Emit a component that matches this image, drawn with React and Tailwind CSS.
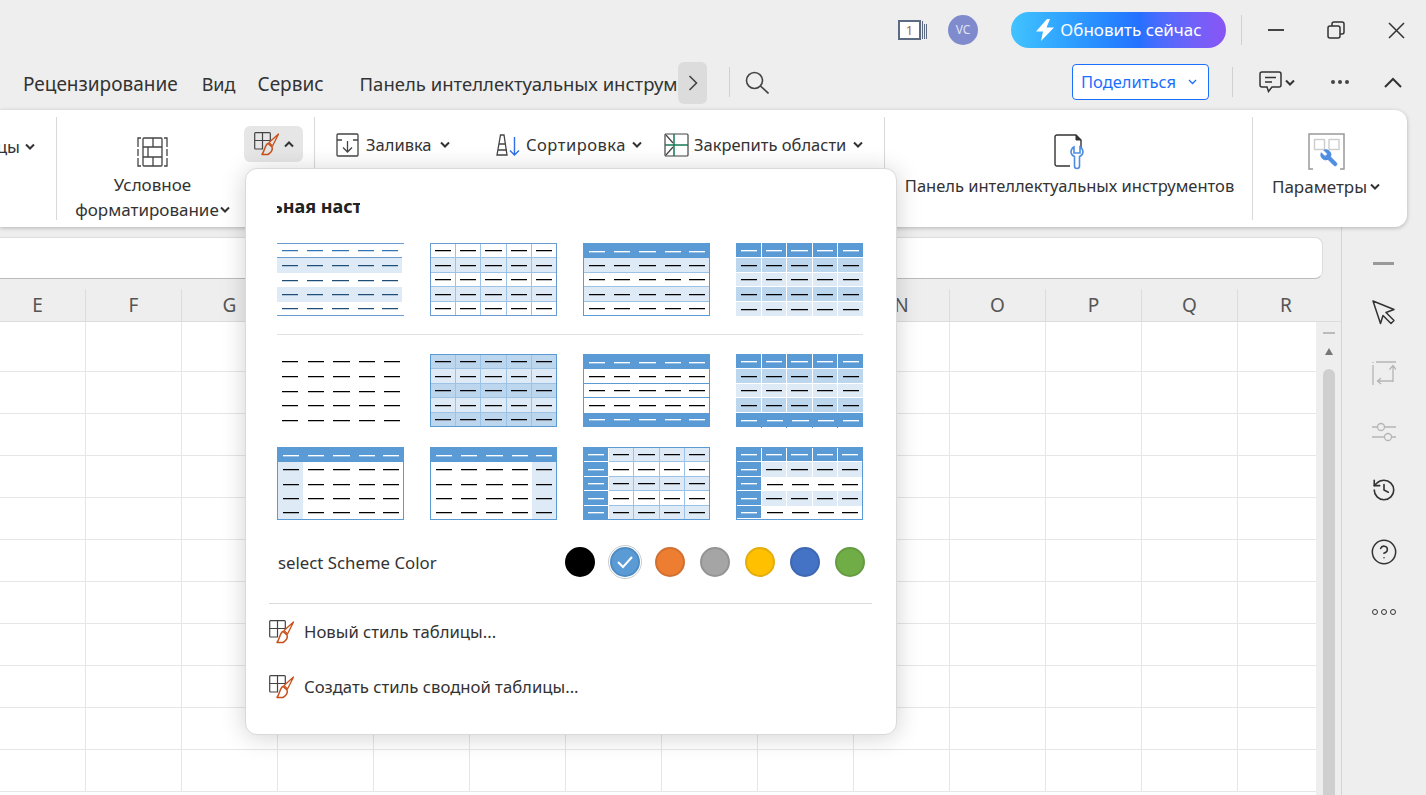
import React from "react";
import { History, CircleHelp } from "lucide-react";

const COLUMNS = ["E", "F", "G", "H", "I", "J", "K", "L", "M", "N", "O", "P", "Q", "R"];
const ROW_HEIGHTS = ["h-[50px]", "h-[42px]", "h-[42px]", "h-[42px]", "h-[42px]", "h-[42px]", "h-[42px]", "h-[42px]", "h-[42px]", "h-[42px]", "h-[42px]"];

const H = "bg-[#5b9bd5]";
const D = "bg-[#bcd6ee]";
const L = "bg-[#deebf6]";
const W = "bg-white";
const NONE = "";

// dashes sit a little heavier than one pixel in the previews
const DASH_BLACK = "bg-black shadow-[0_1px_0_rgba(0,0,0,0.25)]";
const DASH_WHITE = "bg-white shadow-[0_1px_0_rgba(255,255,255,0.35)]";

const THUMBS = [
  {
    outer: "border-y border-[#6a9bd0]",
    hline: (r) => (r === 0 ? "border-b border-[#6a9bd0]" : NONE),
    bg: (r) => (r % 2 === 1 ? L : W),
    dash: (r) => (r === 0 ? "bg-[#2e75b6] shadow-[0_1px_0_rgba(46,117,182,0.25)]" : "bg-[#1f4e79] shadow-[0_1px_0_rgba(31,78,121,0.25)]"),
  },
  {
    outer: "border border-[#6a9bd0]",
    hline: (r) => (r < 4 ? "border-b border-[#9cc2e5]" : NONE),
    vline: () => "border-r border-[#9cc2e5]",
    bg: (r) => (r % 2 === 1 ? L : W),
  },
  {
    outer: "border border-[#5b9bd5]",
    hline: (r) => (r > 0 && r < 4 ? "border-b border-[#9cc2e5]" : NONE),
    bg: (r) => (r === 0 ? H : r % 2 === 1 ? L : W),
    dash: (r) => (r === 0 ? DASH_WHITE : DASH_BLACK),
  },
  {
    flush: true,
    hline: (r) => (r < 4 ? "border-b border-white" : NONE),
    vline: () => "border-r border-white",
    bg: (r) => (r === 0 ? H : r % 2 === 1 ? D : L),
    dash: (r) => (r === 0 ? DASH_WHITE : DASH_BLACK),
  },
  {
    flush: true,
    bg: () => W,
  },
  {
    outer: "border border-[#5b9bd5]",
    hline: (r) => (r < 4 ? "border-b border-[#9cc2e5]" : NONE),
    vline: () => "border-r border-[#9cc2e5]",
    bg: (r) => (r % 2 === 0 ? D : L),
  },
  {
    outer: "border border-[#5b9bd5]",
    hline: (r) => (r > 0 && r < 3 ? "border-b border-[#5b9bd5]" : NONE),
    bg: (r) => (r === 0 || r === 4 ? H : W),
    dash: (r) => (r === 0 || r === 4 ? DASH_WHITE : DASH_BLACK),
  },
  {
    flush: true,
    ticks: true,
    hline: (r) => (r < 4 ? "border-b border-white" : NONE),
    vline: (r) => (r < 4 ? "border-r border-white" : NONE),
    bg: (r) => (r === 0 || r === 4 ? H : r % 2 === 1 ? D : L),
    dash: (r) => (r === 0 || r === 4 ? DASH_WHITE : DASH_BLACK),
  },
  {
    outer: "border border-[#5b9bd5]",
    bg: (r, c) => (r === 0 ? H : c === 0 ? L : W),
    dash: (r) => (r === 0 ? DASH_WHITE : DASH_BLACK),
  },
  {
    outer: "border border-[#5b9bd5]",
    bg: (r, c) => (r === 0 ? H : c === 4 ? L : W),
    dash: (r) => (r === 0 ? DASH_WHITE : DASH_BLACK),
  },
  {
    outer: "border border-[#5b9bd5]",
    hline: (r, c) => (r < 4 ? (c === 0 ? "border-b border-white" : "border-b border-[#9cc2e5]") : NONE),
    vline: (r, c) => (c === 0 ? "border-r border-white" : "border-r border-[#9cc2e5]"),
    bg: (r, c) => (c === 0 ? H : r % 2 === 0 ? L : W),
    dash: (r, c) => (c === 0 ? DASH_WHITE : DASH_BLACK),
  },
  {
    outer: "border border-[#5b9bd5]",
    hline: (r, c) => (r === 0 || c === 0 ? "border-b border-white" : NONE),
    vline: (r, c) => (r === 0 || c === 0 || r % 2 === 1 ? "border-r border-white" : NONE),
    bg: (r, c) => (r === 0 || c === 0 ? H : r % 2 === 1 ? L : W),
    dash: (r, c) => (r === 0 || c === 0 ? DASH_WHITE : DASH_BLACK),
  },
];

const SWATCHES = [
  "bg-black border-black",
  "bg-[#5b9bd5] border-[#4f8cc4]",
  "bg-[#ed7d31] border-[#d07032]",
  "bg-[#a5a5a5] border-[#949494]",
  "bg-[#ffc000] border-[#e3ad0d]",
  "bg-[#4472c4] border-[#3e68b2]",
  "bg-[#70ad47] border-[#659c41]",
];

const Chev = ({ up, className = "" }) => (
  <svg width="10" height="7" viewBox="0 0 10 7" className={className} fill="none" stroke="#333" strokeWidth="2">
    <polyline points={up ? "1,5.5 5,1.5 9,5.5" : "1,1.5 5,5.5 9,1.5"} />
  </svg>
);

const TableBrush = ({ className = "" }) => (
  <svg width="25" height="24" viewBox="0 0 25 24" className={className} fill="none">
    <path d="M9 17H1.500a.8.8 0 0 1-.8-.8V1.500a.8.8 0 0 1 .8-.8h14a.8.8 0 0 1 .8.8V9" stroke="#444" strokeWidth="1.200" />
    <path d="M.7 8.500H16M8.500.7V17" stroke="#444" strokeWidth="1.200" />
    <path d="M24.500 2 15 10.500 18.500 14Z" stroke="#c8501a" strokeWidth="1.300" strokeLinejoin="round" />
    <path d="M14 11.500c-3 1-3 6.500-6 11h6c2.500-1.500 5-4.500 4-7.500Z" stroke="#c8501a" strokeWidth="1.500" strokeLinejoin="round" />
  </svg>
);

const ConditionalIcon = () => (
  <svg width="31" height="30" viewBox="0 0 31 30" fill="none" stroke="#444" strokeWidth="1.300" className="shrink-0">
    <path d="M4 1H1v9M1 12v7M1 21v8h3M27 1h3v9M30 12v7M30 21v8h-3" />
    <rect x="6" y="1" width="19" height="28" rx="1" />
    <path d="M6 10h19M6 20h19M16 1v9M11 10v10M16 20v9" />
  </svg>
);

const FillIcon = () => (
  <svg width="23" height="24" viewBox="0 0 23 24" fill="none" stroke="#444" strokeWidth="1.300">
    <rect x="1" y="1" width="21" height="22" rx="1" />
    <path d="M1 7h5M17 7h5M11.500 8v11M7 14.500l4.500 4.500 4.500-4.500" />
  </svg>
);

const SortIcon = () => (
  <svg width="25" height="24" viewBox="0 0 25 24" fill="none">
    <path d="M1 22 4.500 2H8l3 20H1ZM3 11h7M2 17h9" stroke="#444" strokeWidth="1.300" />
    <path d="M18.500 4v18M14 17.500l4.500 4.500 4.500-4.500" stroke="#2f6fe8" strokeWidth="1.400" />
  </svg>
);

const FreezeIcon = () => (
  <svg width="25" height="24" viewBox="0 0 25 24" fill="none">
    <rect x="1" y="1" width="23" height="22" rx="1" stroke="#444" strokeWidth="1.200" />
    <path d="M2 2l7 8M2 22l7-8" stroke="#444" strokeWidth="1.200" />
    <path d="M10 1v22M1 12h23" stroke="#177a57" strokeWidth="1.500" />
  </svg>
);

const ToolIcon = () => (
  <svg width="32" height="36" viewBox="0 0 32 36" fill="none" className="shrink-0">
    <path d="M16 32H3a2 2 0 0 1-2-2V3a2 2 0 0 1 2-2h19l5 5v8" stroke="#333" strokeWidth="1.400" />
    <path d="M22 1v5h5" fill="#333" stroke="#333" />
    <path d="M20 13v6h6v-6c2.500 1.500 3 4 3 5a5 5 0 0 1-3.500 4.500V32a2.500 2.500 0 0 1-5 0v-9.500A5 5 0 0 1 17 18c0-1 .5-3.500 3-5Z" fill="white" stroke="#4f8de0" strokeWidth="1.600" />
  </svg>
);

const ParamsIcon = () => (
  <svg width="37" height="37" viewBox="0 0 37 37" fill="none" className="shrink-0">
    <path d="M5 36H1V1h35v35h-4" stroke="#999" strokeWidth="1.500" />
    <rect x="6.500" y="6.500" width="10" height="10" stroke="#ccc" strokeWidth="1.400" />
    <rect x="21" y="6.500" width="10" height="10" stroke="#ccc" strokeWidth="1.400" />
    <g transform="translate(31.500 15) scale(-0.85 0.85)">
      <path
        d="M14.700 6.300a1 1 0 0 0 0 1.400l1.600 1.600a1 1 0 0 0 1.400 0l3.770-3.770a6 6 0 0 1-7.940 7.940l-6.910 6.910a2.120 2.120 0 0 1-3-3l6.910-6.910a6 6 0 0 1 7.940-7.940l-3.760 3.760z"
        fill="#4f8de0"
        stroke="#4f8de0"
        strokeWidth="1"
      />
    </g>
  </svg>
);

const Thumb = ({ outer = "", flush, ticks, hline, vline, bg, dash }) => {
  const rows = [0, 1, 2, 3, 4];
  const cols = [0, 1, 2, 3, 4];
  const sizing = flush
    ? "grid-cols-[26px_25px_26px_25px_25px] grid-rows-[15px_15px_14px_15px_14px]"
    : "grid-cols-[25px_25px_26px_25px_24px] grid-rows-[14px_15px_14px_15px_13px]";
  return (
    <div className={`grid w-[127px] h-[73px] box-border ${sizing} ${outer}`}>
      {rows.map((r) =>
        cols.map((c) => (
          <div
            key={`${r}-${c}`}
            className={`relative flex items-center justify-center box-border ${bg(r, c)} ${hline ? hline(r, c) : ""} ${vline && c < 4 ? vline(r, c) : ""}`}
          >
            <div className={`h-px ${c === 2 ? "w-[17px]" : "w-4"} ${dash ? dash(r, c) : DASH_BLACK}`} />
            {ticks && r === 4 && c < 4 && <div className="absolute right-0 -bottom-px w-px h-px bg-[#5b9bd5]" />}
          </div>
        ))
      )}
    </div>
  );
};

const TitleBar = () => (
  <div className="flex items-center h-[60px] shrink-0 pl-[898px]">
    <div className="flex items-center w-[31px]">
      <div className="flex items-center justify-center w-[23px] h-[20px] border-2 border-[#5c6b82] bg-white text-[13px] leading-none text-[#a5663a]">1</div>
      <div className="flex items-end gap-px ml-[1px] h-[18px]">
        <div className="w-px h-[18px] bg-[#5c6b82]" />
        <div className="w-px h-[15px] bg-[#5c6b82]" />
        <div className="w-px h-[15px] bg-[#5c6b82]" />
      </div>
    </div>
    <div className="flex items-center justify-center w-[30px] h-[30px] rounded-full bg-[#7f8bcd] ml-[19px] text-[12px] text-[#dfe3f5]">VC</div>
    <div className="flex items-center justify-center gap-[5px] w-[215px] h-[36px] rounded-full ml-[33px] bg-gradient-to-r from-[#42c3ff] via-[#2570ff] via-60% to-[#8a55f5] text-white text-[17px]">
      <svg width="20" height="22" viewBox="0 0 20 22" fill="white">
        <path d="M12 0 1 12.500h7L6 22 19 8.500h-7.500L15 0Z" />
      </svg>
      <span>Обновить сейчас</span>
    </div>
    <div className="w-px h-[30px] bg-[#d0d0d0] ml-[15px]" />
    <div className="w-[16px] h-[2px] bg-[#444] ml-[26px]" />
    <svg width="18" height="18" viewBox="0 0 18 18" fill="none" stroke="#333" strokeWidth="1.500" className="ml-[43px]">
      <rect x="1" y="5" width="12" height="12" rx="2" />
      <path d="M5 5V3a2 2 0 0 1 2-2h8a2 2 0 0 1 2 2v8a2 2 0 0 1-2 2h-2" />
    </svg>
    <svg width="17" height="17" viewBox="0 0 17 17" fill="none" stroke="#333" strokeWidth="1.500" className="ml-[43px]">
      <path d="M1 1l15 15M16 1 1 16" />
    </svg>
  </div>
);

const TabBar = () => (
  <div className="flex items-center h-[50px] shrink-0 text-[#333]">
    <div className="flex items-center w-[678px] pl-[23px] -mt-[2px] overflow-hidden whitespace-nowrap">
      <span className="text-[19px]">Рецензирование</span>
      <span className="ml-[24px] text-[18px]">Вид</span>
      <span className="ml-[22px] text-[19px]">Сервис</span>
      <span className="ml-[36px] text-[18.5px]">Панель интеллектуальных инструментов</span>
    </div>
    <div className="flex items-center justify-center w-[29px] h-[42px] rounded-md bg-[#dcdcdc] -mt-[5px]">
      <svg width="10" height="16" viewBox="0 0 10 16" fill="none" stroke="#444" strokeWidth="1.600">
        <path d="M1.500 1 8.500 8l-7 7" />
      </svg>
    </div>
    <div className="w-px h-[30px] bg-[#d0d0d0] ml-[22px] -mt-[6px]" />
    <svg width="24" height="23" viewBox="0 0 24 23" fill="none" stroke="#444" strokeWidth="1.600" className="ml-[15px] -mt-[5px]">
      <circle cx="9.500" cy="9.500" r="8" />
      <path d="m15.500 15 8 7.500" />
    </svg>
    <div className="flex items-center justify-between w-[137px] h-[36px] rounded border border-[#1a6fff] bg-white ml-[303px] pl-[8px] pr-[11px] -mt-[6px] text-[16.5px] text-[#1a6fff]">
      <span>Поделиться</span>
      <svg width="9" height="6" viewBox="0 0 9 6" fill="none" stroke="#1a6fff" strokeWidth="1.300">
        <path d="m1 1 3.500 3.500L8 1" />
      </svg>
    </div>
    <div className="w-px h-[30px] bg-[#d0d0d0] ml-[23px] -mt-[6px]" />
    <svg width="23" height="22" viewBox="0 0 23 22" fill="none" stroke="#333" strokeWidth="1.500" className="ml-[26px] -mt-[6px]">
      <path d="M3 1h17a2 2 0 0 1 2 2v11a2 2 0 0 1-2 2h-7l-3.500 4.500L8 16H3a2 2 0 0 1-2-2V3a2 2 0 0 1 2-2Z" />
      <path d="M6 6.500h11M6 11h7" />
    </svg>
    <Chev className="ml-[3px] -mt-[6px]" />
    <div className="flex gap-[3px] ml-[36px] -mt-[6px]">
      <div className="w-[4px] h-[4px] rounded-full bg-[#444]" />
      <div className="w-[4px] h-[4px] rounded-full bg-[#444]" />
      <div className="w-[4px] h-[4px] rounded-full bg-[#444]" />
    </div>
    <svg width="18" height="11" viewBox="0 0 18 11" fill="none" stroke="#333" strokeWidth="2" className="ml-[35px] -mt-[5px]">
      <path d="m1 10 8-8 8 8" />
    </svg>
  </div>
);

const RibbonAction = ({ icon, label, className = "", textClass = "ml-[5px]", chevClass = "ml-[7px]" }) => (
  <div className={`flex items-center ${className}`}>
    {icon}
    <span className={`mt-[1px] ${textClass}`}>{label}</span>
    <Chev className={chevClass} />
  </div>
);

const Ribbon = () => (
  <div className="relative flex h-[117px] w-[1407px] shrink-0 bg-white rounded-r-xl shadow-[0_1px_4px_rgba(0,0,0,0.25)] text-[17px] text-[#333] py-[7px]">
    <div className="flex items-start justify-end w-[57px] border-r border-[#d9d9d9] pr-[21px] pt-[17px]">
      <div className="flex items-center gap-[5px]">
        <span>цы</span>
        <Chev />
      </div>
    </div>
    <div className="flex w-[258px] border-r border-[#d9d9d9]">
      <div className="flex flex-col items-center w-[187px] pl-[4px] pt-[20px]">
        <ConditionalIcon />
        <span className="mt-[5px] leading-[25px] shrink-0">Условное</span>
        <div className="flex items-center gap-[1px] leading-[25px] shrink-0">
          <span>форматирование</span>
          <Chev />
        </div>
      </div>
      <div className="flex items-center justify-center gap-[5px] w-[59px] h-[36px] mt-[9px] rounded-md bg-[#e6e6e6]">
        <TableBrush />
        <Chev up />
      </div>
    </div>
    <div className="flex items-start w-[570px] border-r border-[#d9d9d9] pt-[15px] pl-[21px] text-[16.5px]">
      <RibbonAction icon={<FillIcon />} label="Заливка" className="w-[160px]" textClass="ml-[7px]" chevClass="ml-[8px]" />
      <RibbonAction icon={<SortIcon />} label="Сортировка" className="w-[168px]" textClass="ml-[5px] tracking-[0.5px]" chevClass="ml-[6px]" />
      <RibbonAction icon={<FreezeIcon />} label="Закрепить области" />
    </div>
    <div className="flex flex-col items-center w-[368px] border-r border-[#d9d9d9] pt-[17px] pl-[2px] text-[16.5px]">
      <ToolIcon />
      <span className="mt-[4px]">Панель интеллектуальных инструментов</span>
    </div>
    <div className="flex flex-col items-center w-[147px] pt-[16px] pr-[1px]">
      <ParamsIcon />
      <div className="flex items-center gap-[3px] mt-[4px]">
        <span>Параметры</span>
        <Chev />
      </div>
    </div>
  </div>
);

const Sheet = () => (
  <div className="flex flex-col flex-1 min-w-0 min-h-0 border-r border-[#d4d4d4]">
    <div className="h-[42px] mt-[10px] mr-[18px] shrink-0 bg-white rounded-r-lg border border-l-0 border-[#dcdcdc] border-b-[#bbbbbb]" />
    <div className="flex h-[43px] shrink-0 items-end overflow-hidden border-b border-[#dcdcdc]">
      {COLUMNS.map((col, i) => (
        <div
          key={col}
          className={`flex items-center justify-center w-[96px] shrink-0 h-[32px] text-[19px] text-[#555] ${i === 0 ? "-ml-[10px]" : ""} ${i < COLUMNS.length - 1 ? "border-r border-[#dcdcdc]" : ""}`}
        >
          {col}
        </div>
      ))}
    </div>
    <div className="flex flex-1 min-h-0">
      <div className="flex-1 min-w-0 overflow-hidden bg-white">
        {ROW_HEIGHTS.map((h, r) => (
          <div key={r} className={`flex ${h}`}>
            {COLUMNS.map((col, i) => (
              <div
                key={col}
                className={`w-[96px] shrink-0 border-r border-b border-[#e6e6e6] ${i === 0 ? "-ml-[10px]" : ""}`}
              />
            ))}
          </div>
        ))}
      </div>
      <div className="flex flex-col items-center w-[25px] shrink-0 bg-[#eeeeee]">
        <div className="w-[12px] h-[2px] bg-[#bbbbbb] mt-[10px]" />
        <div className="w-0 h-0 mt-[14px] border-x-[4px] border-x-transparent border-b-[7px] border-b-[#777777]" />
        <div className="flex-1 w-[12px] mt-[14px] rounded-t-md bg-[#cfcfcf]" />
      </div>
    </div>
  </div>
);

const SideBar = () => (
  <div className="flex flex-col items-center w-[84px] shrink-0 pt-[35px] pr-px">
    <div className="w-[21px] h-[3px] bg-[#999999]" />
    <svg width="24" height="25" viewBox="0 0 24 25" fill="none" stroke="#333" strokeWidth="1.500" strokeLinejoin="round" className="mt-[35px]">
      <path d="M1 1l21 8.500-8 3 8 8-3 3-8-8-2.500 8L1 1Z" />
    </svg>
    <svg width="24" height="24" viewBox="0 0 24 24" fill="none" stroke="#b5b5b5" strokeWidth="1.300" className="mt-[36px]">
      <path d="M4 1h20M1 1v1M1 4v20M21 21V5M17.500 8.500 21 4.500l3 4M21 20H6M9 17l-3.500 3 3.500 3" />
    </svg>
    <svg width="24" height="22" viewBox="0 0 24 22" fill="none" stroke="#b5b5b5" strokeWidth="1.300" className="mt-[36px]">
      <path d="M0 6h6M12 6h12M0 16h13M19 16h5" />
      <circle cx="9" cy="6" r="3.500" />
      <circle cx="16" cy="16" r="3.500" />
    </svg>
    <History size={26} strokeWidth={1.500} color="#333" className="mt-[34px]" />
    <CircleHelp size={28} strokeWidth={1.300} color="#333" className="mt-[35px]" />
    <div className="flex gap-[3px] mt-[43px]">
      <div className="w-[6px] h-[6px] rounded-full border-[1.500px] border-[#333]" />
      <div className="w-[6px] h-[6px] rounded-full border-[1.500px] border-[#333]" />
      <div className="w-[6px] h-[6px] rounded-full border-[1.500px] border-[#333]" />
    </div>
  </div>
);

const StyleMenu = () => (
  <div className="absolute left-[245px] top-[168px] flex flex-col w-[652px] h-[567px] bg-white rounded-xl border border-[#d9d9d9] shadow-[0_2px_24px_rgba(0,0,0,0.18)] text-[#333]">
    <div className="w-[83px] ml-[31px] mt-[25px] h-[24px] overflow-hidden whitespace-nowrap text-[18px] leading-[24px] font-bold text-[#222]">
      <span className="-ml-[5px] inline-block">ьная настройка</span>
    </div>
    <div className="grid grid-cols-[127px_127px_127px_127px] gap-x-[26px] ml-[31px] mt-[25px]">
      {THUMBS.slice(0, 4).map((t, i) => (
        <Thumb key={i} {...t} />
      ))}
    </div>
    <div className="h-px w-[586px] bg-[#e2e2e2] ml-[31px] mt-[18px]" />
    <div className="grid grid-cols-[127px_127px_127px_127px] gap-x-[26px] gap-y-[20px] ml-[31px] mt-[19px]">
      {THUMBS.slice(4).map((t, i) => (
        <Thumb key={i} {...t} />
      ))}
    </div>
    <div className="flex items-center h-[36px] ml-[32px] mt-[24px]">
      <span className="w-[287px] mt-[1px] text-[16.8px]">select Scheme Color</span>
      <div className="flex items-center gap-[15px]">
        {SWATCHES.map((s, i) =>
          i === 1 ? (
            <div key={s} className="flex items-center justify-center w-[34px] h-[34px] -mx-[2px] rounded-full border border-[#cccccc] bg-white">
              <div className={`flex items-center justify-center w-[30px] h-[30px] rounded-full border-2 ${s}`}>
                <svg width="18" height="14" viewBox="0 0 18 14" fill="none" stroke="white" strokeWidth="2">
                  <path d="m2 7 5 5 9-10" />
                </svg>
              </div>
            </div>
          ) : (
            <div key={s} className={`w-[30px] h-[30px] rounded-full border-2 ${s}`} />
          )
        )}
      </div>
    </div>
    <div className="h-px w-[603px] bg-[#d9d9d9] ml-[23px] mt-[23px]" />
    <div className="flex items-center h-[55px] ml-[23px] text-[16.7px]">
      <TableBrush />
      <span className="ml-[10px]">Новый стиль таблицы...</span>
    </div>
    <div className="flex items-center h-[55px] ml-[23px] text-[16.7px]">
      <TableBrush />
      <span className="ml-[10px]">Создать стиль сводной таблицы...</span>
    </div>
  </div>
);

const App = () => {
  return (
    <div className="relative flex flex-col w-[1426px] h-[795px] overflow-hidden bg-[#eeeeee] font-['Noto_Sans','Open_Sans',sans-serif]">
      <TitleBar />
      <TabBar />
      <Ribbon />
      <div className="flex flex-1 min-h-0">
        <Sheet />
        <SideBar />
      </div>
      <StyleMenu />
    </div>
  );
};

export default App;
